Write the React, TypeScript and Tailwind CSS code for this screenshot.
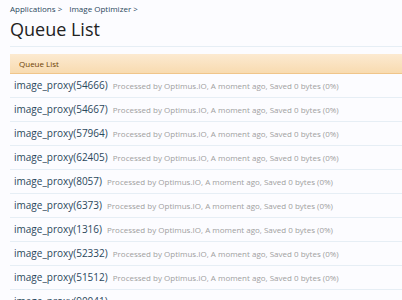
import React from 'react';

const ids = ['54666', '54667', '57964', '62405', '8057', '6373', '1316', '52332', '51512', '90041'];

export default function App() {
  return (
    <div className="h-[300px] overflow-hidden bg-[#fcfcff] pl-[10px] pt-[3px] font-['Open_Sans',sans-serif]">
      <div className="flex gap-[7px] text-[8px] text-[#2b485c]">
        <span>Applications &gt;</span>
        <span>Image Optimizer &gt;</span>
      </div>
      <h1 className="mt-[2px] text-[18px] leading-[24px] text-[#222]">Queue List</h1>
      <div className="mt-[5px] border-t border-[#e6eef5]"></div>
      <div className="mt-[7px] flex h-[20px] items-center border-b border-[#f0c58a] bg-gradient-to-b from-[#fcead1] to-[#f8dbb0] pl-[9px] text-[8px] text-[#6d3f03]">
        Queue List
      </div>
      {ids.map((id) => (
        <div key={id} className="flex h-[24px] items-center gap-[5px] border-b border-[#e6eef5] pl-[4px]">
          <span className="text-[10px] font-medium text-[#2b485c]">image_proxy({id})</span>
          <span className="text-[8px] text-[#a0a0a0]">Processed by Optimus.IO, A moment ago, Saved 0 bytes (0%)</span>
        </div>
      ))}
    </div>
  );
}
